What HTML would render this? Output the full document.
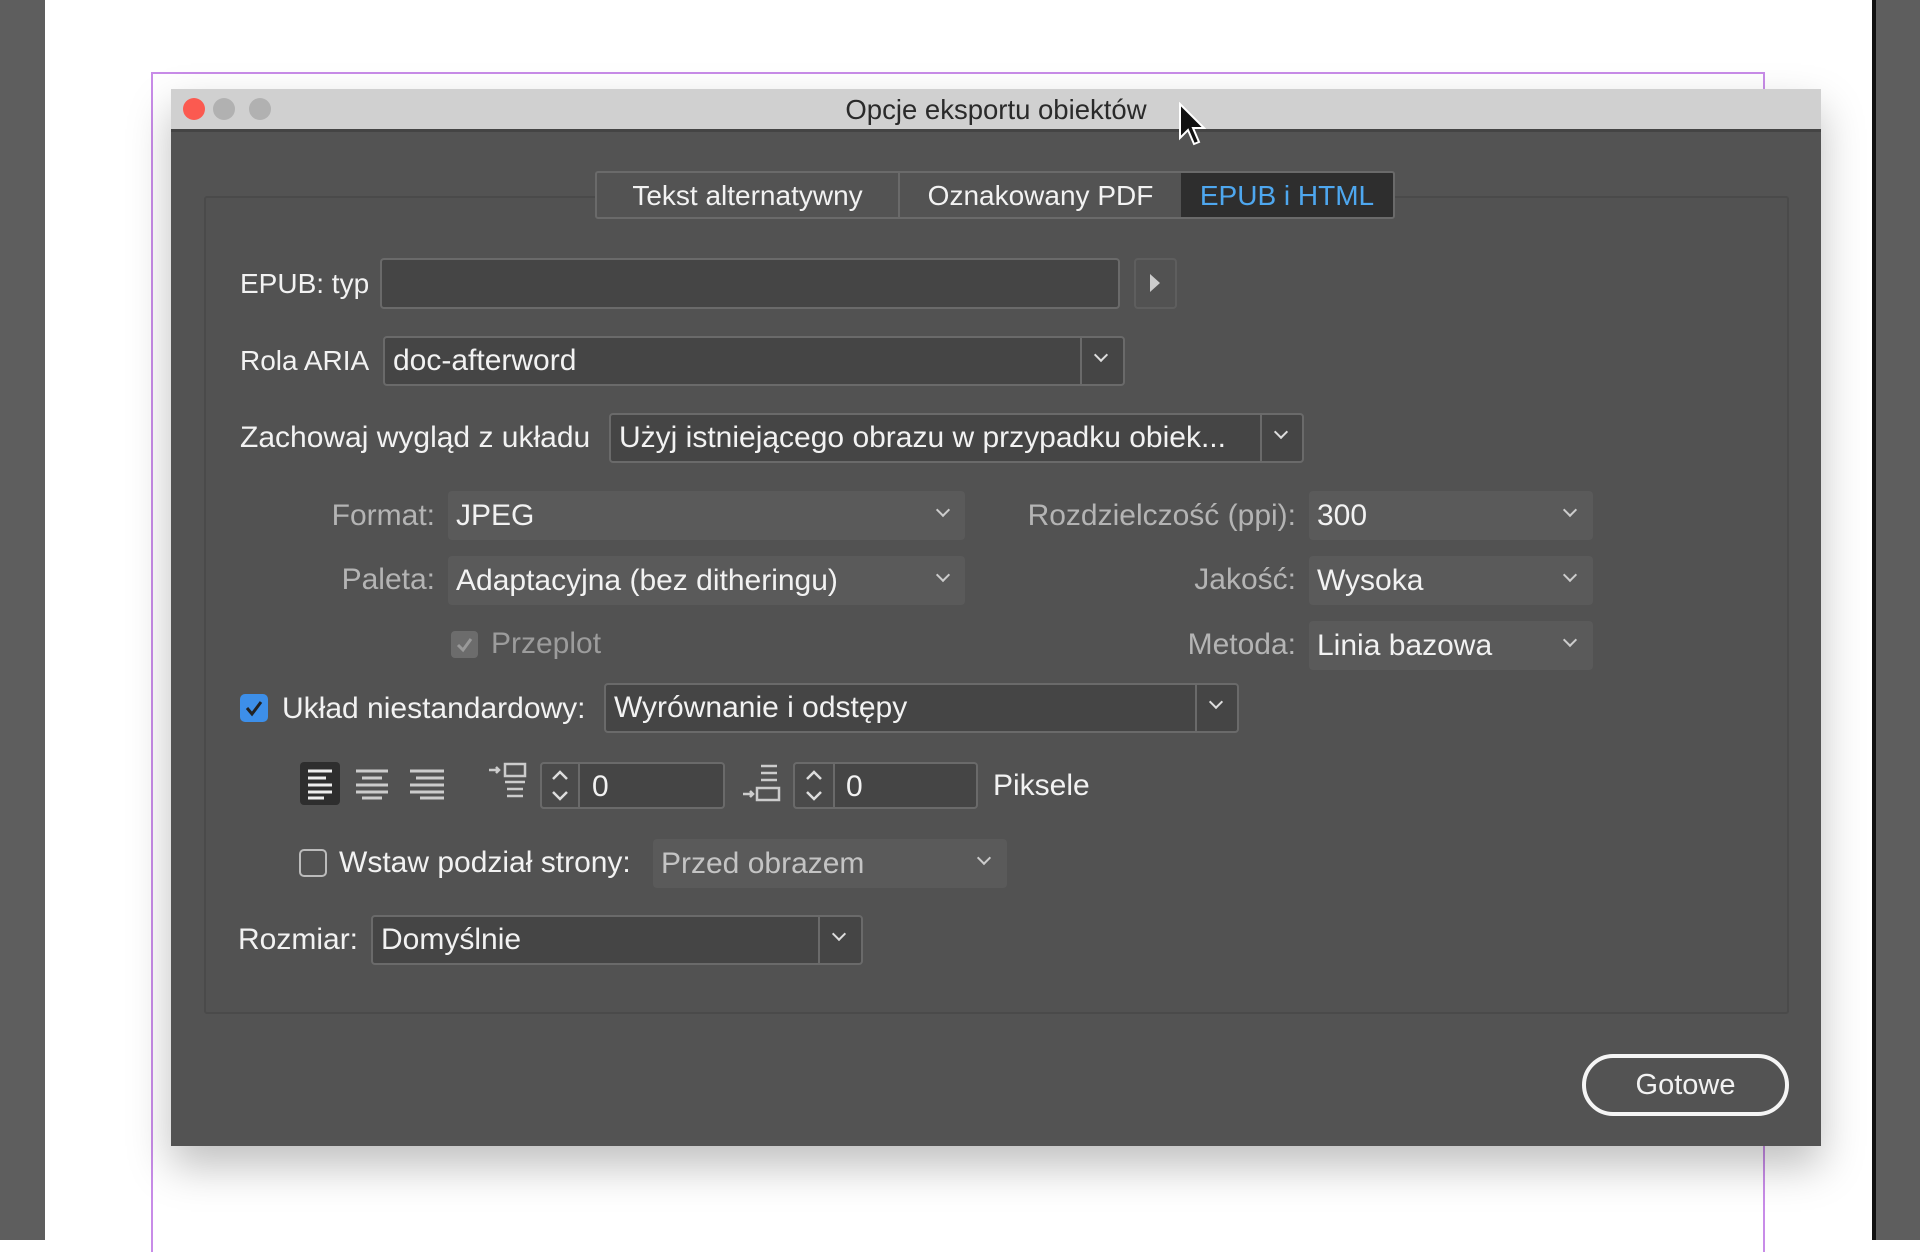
<!DOCTYPE html>
<html><head><meta charset="utf-8">
<style>
*{margin:0;padding:0;box-sizing:border-box}
body{width:1920px;height:1242px;position:relative;background:#fff;overflow:hidden;font-family:"Liberation Sans",sans-serif;font-size:30px;color:#f2f2f2}
.a{position:absolute}
.lbl{position:absolute;white-space:nowrap;line-height:40px}
.dis{color:#b4b4b4}
.inp{position:absolute;background:#454545;border:2px solid #6a6a6a;border-radius:4px}
.inp span{position:absolute;left:8px;top:50%;transform:translateY(-50%);white-space:nowrap}
.dd{position:absolute;top:0;bottom:0;right:0;border-left:2px solid #6a6a6a}
.sel{position:absolute;background:#5a5a5a;border-radius:4px}
.sel span{position:absolute;left:8px;top:50%;transform:translateY(-50%);white-space:nowrap}
.chev{position:absolute;width:12px;height:12px;border-right:2px solid #ddd;border-bottom:2px solid #ddd;transform:rotate(45deg)}
</style></head><body>
<div class="a" style="left:0;top:0;width:45px;height:1240px;background:#5e5e5e"></div>
<div class="a" style="left:1872px;top:0;width:4px;height:1240px;background:#111"></div>
<div class="a" style="left:1876px;top:0;width:44px;height:1240px;background:#5e5e5e"></div>
<div class="a" style="left:151px;top:72px;width:1614px;height:1180px;border:2px solid #c88ce8;border-bottom:none"></div>

<div class="a" style="left:171px;top:89px;width:1650px;height:1057px;background:#535353;box-shadow:0 20px 40px rgba(0,0,0,0.25)">
 <div class="a" style="left:0;top:0;width:1650px;height:43px;background:#d0d0d0;border-bottom:3px solid #444"></div>
 <div class="a" style="left:12px;top:9px;width:22px;height:22px;border-radius:50%;background:#fb5a50"></div>
 <div class="a" style="left:42px;top:9px;width:22px;height:22px;border-radius:50%;background:#b1b1b1"></div>
 <div class="a" style="left:78px;top:9px;width:22px;height:22px;border-radius:50%;background:#b1b1b1"></div>
 <div class="a" style="left:0;top:5px;width:1650px;text-align:center;font-size:27.5px;color:#2a2a2a">Opcje eksportu obiektów</div>
</div>
<svg class="a" style="left:1178px;top:102px" width="28" height="46" viewBox="0 0 28 46"><path d="M2 2 L2 36 L10 28 L16 42 L21 40 L15 26 L26 26 Z" fill="#111" stroke="#fff" stroke-width="2"/></svg>

<div class="a" style="left:204px;top:196px;width:1585px;height:818px;border:2px solid #4a4a4a;background:#525252;border-radius:3px"></div>

<div class="a" style="left:595px;top:171px;width:800px;height:48px;border:2px solid #6a6a6a;border-radius:3px;background:#535353;overflow:hidden;font-size:28px">
 <div class="a" style="left:0;top:0;width:301px;height:46px;line-height:46px;text-align:center">Tekst alternatywny</div>
 <div class="a" style="left:301px;top:0;width:2px;height:44px;background:#6a6a6a"></div>
 <div class="a" style="left:303px;top:0;width:281px;height:46px;line-height:46px;text-align:center">Oznakowany PDF</div>
 <div class="a" style="left:584px;top:0;width:212px;height:46px;line-height:46px;text-align:center;background:#2e2e2e;color:#4ea7ef">EPUB i HTML</div>
</div>

<div class="lbl" style="left:240px;top:264px;font-size:28px">EPUB: typ</div>
<div class="inp" style="left:380px;top:258px;width:740px;height:51px"></div>
<div class="a" style="left:1134px;top:258px;width:43px;height:51px;border:2px solid #5e5e5e;border-radius:4px"></div>
<div class="a" style="left:1150px;top:274px;width:0;height:0;border-left:10px solid #ccc;border-top:9px solid transparent;border-bottom:9px solid transparent"></div>

<div class="lbl" style="left:240px;top:341px;font-size:28px">Rola ARIA</div>
<div class="inp" style="left:383px;top:336px;width:742px;height:50px"><span>doc-afterword</span><div class="dd" style="width:43px"><div class="chev" style="left:14px;top:12px;width:10px;height:10px"></div></div></div>

<div class="lbl" style="left:240px;top:418px">Zachowaj wygląd z układu</div>
<div class="inp" style="left:609px;top:413px;width:695px;height:50px"><span>Użyj istniejącego obrazu w przypadku obiek...</span><div class="dd" style="width:42px"><div class="chev" style="left:14px;top:12px;width:10px;height:10px"></div></div></div>

<div class="lbl dis" style="left:240px;top:496px;width:195px;text-align:right">Format:</div>
<div class="sel" style="left:448px;top:491px;width:517px;height:49px"><span>JPEG</span><div class="chev" style="left:490px;top:14px;width:10px;height:10px;border-color:#ccc"></div></div>
<div class="lbl dis" style="left:940px;top:496px;width:356px;text-align:right">Rozdzielczość (ppi):</div>
<div class="sel" style="left:1309px;top:491px;width:284px;height:49px"><span>300</span><div class="chev" style="left:256px;top:14px;width:10px;height:10px;border-color:#ccc"></div></div>

<div class="lbl dis" style="left:240px;top:560px;width:195px;text-align:right">Paleta:</div>
<div class="sel" style="left:448px;top:556px;width:517px;height:49px"><span>Adaptacyjna (bez ditheringu)</span><div class="chev" style="left:490px;top:14px;width:10px;height:10px;border-color:#ccc"></div></div>
<div class="lbl dis" style="left:960px;top:560px;width:336px;text-align:right">Jakość:</div>
<div class="sel" style="left:1309px;top:556px;width:284px;height:49px"><span>Wysoka</span><div class="chev" style="left:256px;top:14px;width:10px;height:10px;border-color:#ccc"></div></div>

<div class="a" style="left:451px;top:631px;width:27px;height:27px;border-radius:4px;background:#6c6c6c"></div>
<svg class="a" style="left:451px;top:631px" width="27" height="27"><path d="M7 14 L12 19 L20 8" stroke="#999" stroke-width="3" fill="none"/></svg>
<div class="lbl" style="left:491px;top:624px;color:#9c9c9c">Przeplot</div>
<div class="lbl dis" style="left:960px;top:625px;width:336px;text-align:right">Metoda:</div>
<div class="sel" style="left:1309px;top:621px;width:284px;height:49px"><span>Linia bazowa</span><div class="chev" style="left:256px;top:14px;width:10px;height:10px;border-color:#ccc"></div></div>

<div class="a" style="left:240px;top:694px;width:28px;height:28px;border-radius:5px;background:#3d8fe9"></div>
<svg class="a" style="left:240px;top:694px" width="28" height="28"><path d="M7 14 L12 20 L21 8" stroke="#222" stroke-width="3" fill="none"/></svg>
<div class="lbl" style="left:282px;top:689px">Układ niestandardowy:</div>
<div class="inp" style="left:604px;top:683px;width:635px;height:50px"><span>Wyrównanie i odstępy</span><div class="dd" style="width:42px"><div class="chev" style="left:14px;top:12px;width:10px;height:10px"></div></div></div>

<div class="a" style="left:300px;top:762px;width:40px;height:43px;background:#2e2e2e;border-radius:4px"></div>
<svg class="a" style="left:300px;top:762px" width="150" height="43" stroke-width="3" fill="none">
 <g stroke="#eee"><path d="M8 9H32M8 16H26M8 23H32M8 30H32M8 36H24"/></g>
 <g stroke="#ccc"><path d="M56 9H88M62 16H82M56 23H88M56 30H88M62 36H82"/></g>
 <g stroke="#ccc"><path d="M110 9H144M116 16H144M110 23H144M110 30H144M120 36H144"/></g>
</svg>
<svg class="a" style="left:489px;top:762px" width="40" height="43" fill="none" stroke="#ccc" stroke-width="2.5">
 <path d="M0 8H10M7 5L10 8L7 11"/><rect x="16" y="2" width="20" height="12"/><path d="M16 20H36M18 27H34M18 34H34"/>
</svg>
<div class="a" style="left:540px;top:762px;width:185px;height:47px;border:2px solid #6a6a6a;border-radius:4px;background:#454545"></div>
<div class="a" style="left:540px;top:762px;width:40px;height:47px;border:2px solid #6a6a6a;border-radius:4px 0 0 4px;background:#4a4a4a"></div>
<svg class="a" style="left:540px;top:762px" width="40" height="47" fill="none" stroke="#ddd" stroke-width="2.5"><path d="M13 17L20 10L27 17M13 30L20 37L27 30"/></svg>
<div class="lbl" style="left:592px;top:767px">0</div>
<svg class="a" style="left:743px;top:762px" width="40" height="43" fill="none" stroke="#ccc" stroke-width="2.5">
 <path d="M18 4H34M18 11H34M18 18H34"/><rect x="14" y="26" width="22" height="12"/><path d="M0 32H10M7 29L10 32L7 35"/>
</svg>
<div class="a" style="left:793px;top:762px;width:185px;height:47px;border:2px solid #6a6a6a;border-radius:4px;background:#454545"></div>
<div class="a" style="left:793px;top:762px;width:42px;height:47px;border:2px solid #6a6a6a;border-radius:4px 0 0 4px;background:#4a4a4a"></div>
<svg class="a" style="left:794px;top:762px" width="40" height="47" fill="none" stroke="#ddd" stroke-width="2.5"><path d="M13 17L20 10L27 17M13 30L20 37L27 30"/></svg>
<div class="lbl" style="left:846px;top:767px">0</div>
<div class="lbl" style="left:993px;top:766px">Piksele</div>

<div class="a" style="left:299px;top:849px;width:28px;height:28px;border-radius:5px;border:2px solid #bbb"></div>
<div class="lbl" style="left:339px;top:843px">Wstaw podział strony:</div>
<div class="sel" style="left:653px;top:839px;width:354px;height:49px"><span style="color:#c4c4c4">Przed obrazem</span><div class="chev" style="left:326px;top:14px;width:10px;height:10px;border-color:#ccc"></div></div>

<div class="lbl" style="left:238px;top:920px">Rozmiar:</div>
<div class="inp" style="left:371px;top:915px;width:492px;height:50px"><span>Domyślnie</span><div class="dd" style="width:43px"><div class="chev" style="left:14px;top:12px;width:10px;height:10px"></div></div></div>

<div class="a" style="left:1582px;top:1054px;width:207px;height:62px;border:4px solid #f5f5f5;border-radius:31px;text-align:center;line-height:54px;font-size:29px">Gotowe</div>
</body></html>
